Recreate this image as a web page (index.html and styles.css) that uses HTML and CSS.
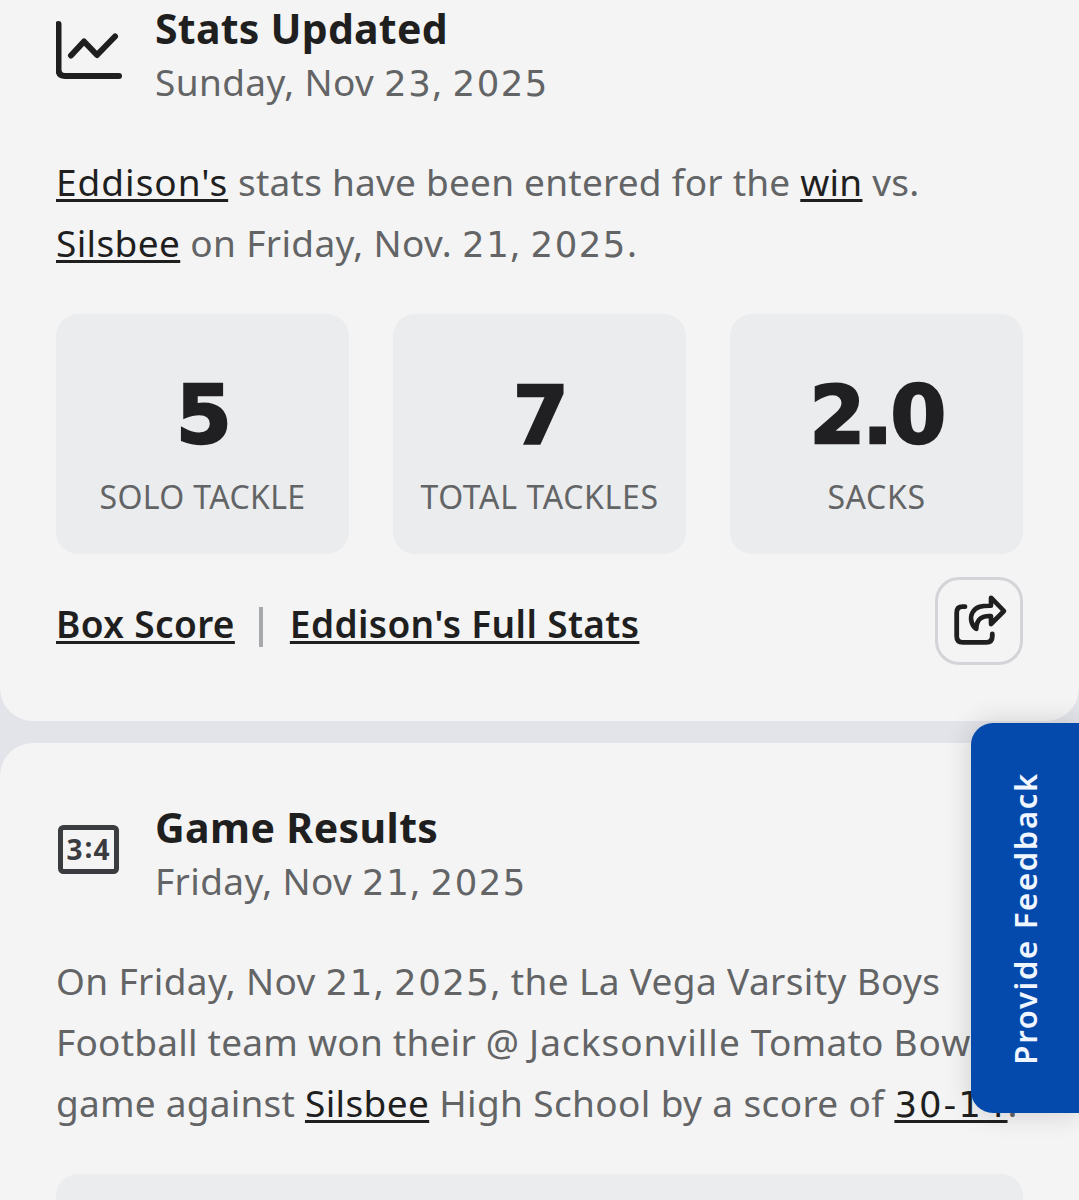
FILE: index.html
```html
<!DOCTYPE html>
<html lang="en">
<head>
<meta charset="utf-8">
<title>Team Feed</title>
<link rel="stylesheet" href="styles.css">
</head>
<body>
<main class="feed">
  <article class="card card-first">
    <header class="card-header">
      <svg class="header-icon" viewBox="0 0 68 68" fill="none" stroke="#1f1f1f" stroke-width="6" stroke-linecap="round" stroke-linejoin="round"><path d="M2.500 7V52.500Q2.500 59 9 59H63M15 38.500L28 24.500L41 38L59 19.500"/></svg>
      <div class="heading">
        <h2>Stats Updated</h2>
        <p class="date">Sunday, Nov <span class="num">23</span>, <span class="num">2025</span></p>
      </div>
    </header>
    <p class="story"><a class="wide">Eddison's</a><span class="tight"> stats have been entered for the <a>win</a> vs.</span><br><a>Silsbee</a> on Friday, Nov. <span class="num">21</span>, <span class="num">2025</span>.</p>
    <div class="stats">
      <div class="stat"><strong>5</strong><span class="label">SOLO TACKLE</span></div>
      <div class="stat"><strong>7</strong><span class="label label-wide">TOTAL TACKLES</span></div>
      <div class="stat"><strong>2.0</strong><span class="label label-wide">SACKS</span></div>
    </div>
    <footer class="actions">
      <a>Box Score</a><i class="divider"></i><a>Eddison's Full Stats</a>
      <button class="share" aria-label="Share"><svg viewBox="0 0 52 52" fill="none" stroke="#1f1f1f" stroke-width="4.800" stroke-linecap="round" stroke-linejoin="round"><path d="M12 11.700H9.700Q3.700 11.700 3.700 17.700V41.300Q3.700 47.300 9.700 47.300H33.300Q39.300 47.300 39.300 41.300V39"/><path d="M38 2.700L51 16L38 29V21C29 20.500 23.500 24 23.300 34C17.500 29.500 17 22 19.500 17.500C23 11.500 29 10.500 38 10.700Z" stroke-width="4.600"/></svg></button>
    </footer>
  </article>
  <article class="card card-second">
    <header class="card-header">
      <svg class="header-icon" viewBox="0 0 68 68"><rect x="4.500" y="11.500" width="56" height="44" rx="3" fill="none" stroke="#3b3c40" stroke-width="5"/><text class="score" x="10.500 28.500 37.500" y="43.500 41.500 43.500">3:4</text></svg>
      <div class="heading">
        <h2 class="results">Game Results</h2>
        <p class="date">Friday, Nov <span class="num">21</span>, <span class="num">2025</span></p>
      </div>
    </header>
    <p class="story">On Friday, Nov <span class="num">21</span>, <span class="num">2025</span>, the La Vega Varsity Boys<br><span class="tight">Football team won their @ </span><span class="wide">Jacksonville</span> <span class="tight">Tomato </span><span class="wide">Bowl</span><br><span class="tight">game against </span><a>Silsbee</a> High School by a score of <a class="num">30-14</a>.</p>
    <div class="result"></div>
  </article>
</main>
<button class="feedback"><span>Provide Feedback</span></button>
</body>
</html>
```
FILE: styles.css
```css
* { box-sizing: border-box; }
body { margin: 0; background: #e3e4ea; color: #636466; font-family: "Noto Sans", sans-serif; font-size: 37px; letter-spacing: .37px; }
h2, p { margin: 0; }
.feed { display: flex; flex-direction: column; gap: 22px; height: 1200px; overflow: hidden; }
.card { flex: none; background: #f4f4f4; padding: 0 56px; }
.card-first { height: 721px; border-radius: 0 0 33px 33px; }
.card-second { height: 457px; border-radius: 33px 33px 0 0; padding-top: 56px; }
.card-header { display: flex; gap: 31px; height: 151px; }
.header-icon { width: 68px; height: 68px; margin-top: 17px; flex: none; }
.heading { display: flex; flex-direction: column; }
h2 { color: #1f1f1f; font-size: 41px; line-height: 56px; font-weight: 700; letter-spacing: .25px; }
.results { letter-spacing: .4px; }
.date { line-height: 52px; }
.story { height: 122px; line-height: 61px; white-space: nowrap; }
.card-second .story { height: 183px; }
.num { font: 400 35.5px/1 "DejaVu Sans", sans-serif; letter-spacing: 1.5px; }
a.num { letter-spacing: 2px; }
.wide { letter-spacing: 1px; }
.tight { letter-spacing: .23px; }
a { color: #1f1f1f; text-decoration: underline; text-decoration-thickness: 2.5px; text-underline-offset: 3px; text-decoration-skip-ink: none; }
.stats { display: grid; grid-template-columns: repeat(3, 1fr); gap: 44px; margin-top: 41px; }
.stat { height: 240px; border-radius: 22px; background: #ebecee; display: flex; flex-direction: column; align-items: center; padding-top: 58px; }
.stat strong { color: #201f22; font: 700 80px/88px "DejaVu Sans", sans-serif; letter-spacing: -2.5px; -webkit-text-stroke: 2.5px #201f22; }
.label { font-size: 32px; line-height: 74px; white-space: nowrap; }
.label-wide { letter-spacing: .65px; }
.actions { display: flex; align-items: center; height: 88px; margin-top: 23px; font-weight: 600; }
.actions a { margin-top: 5px; }
.divider { width: 4px; height: 40px; margin: 12px 27px 0 24px; background: #a7a8ab; }
.share { width: 88px; height: 88px; margin-left: auto; border: 3px solid #d3d4d7; border-radius: 24px; background: transparent; padding: 0; display: grid; place-items: center; }
.share svg { width: 52px; height: 52px; overflow: visible; }
.score { font: 700 28px "Noto Sans", sans-serif; fill: #3b3c40; }
.result { height: 26px; margin-top: 41px; border-radius: 22px 22px 0 0; background: #ebecee; }
.feedback { position: absolute; right: 0; top: 723px; width: 108px; height: 390px; border: 0; padding: 0; border-radius: 22px 0 0 22px; background: #044aad; color: #f0f6ff; box-shadow: 0 0 28px rgba(0,0,0,.16); display: grid; place-items: center; font: 600 31px "Noto Sans", sans-serif; }
.feedback span { writing-mode: vertical-rl; transform: rotate(180deg); letter-spacing: 1.7px; }
```
